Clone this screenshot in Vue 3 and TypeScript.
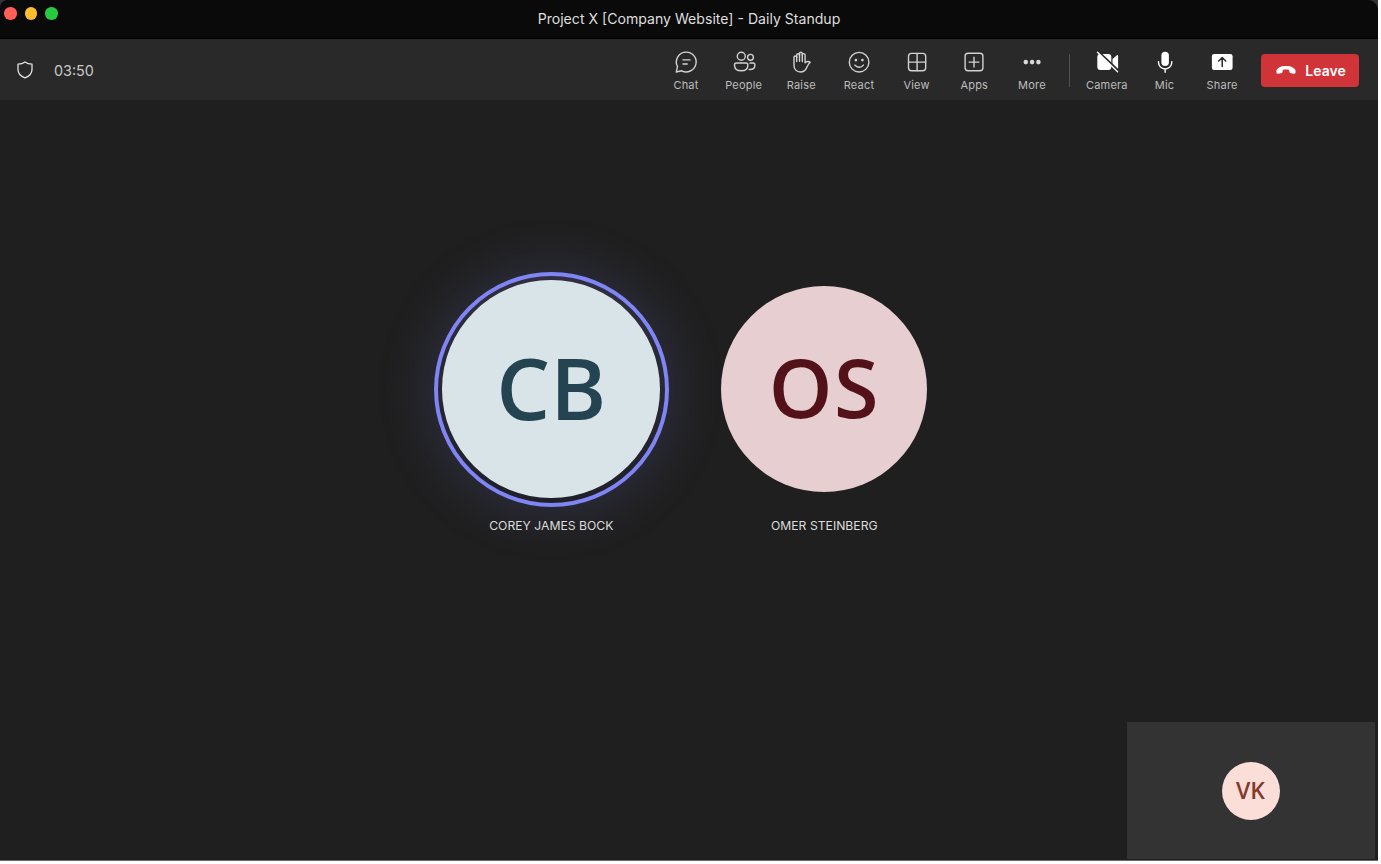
<script setup lang="ts">
interface Tool {
  id: string
  label: string
}

const tools: Tool[] = [
  { id: 'chat', label: 'Chat' },
  { id: 'people', label: 'People' },
  { id: 'raise', label: 'Raise' },
  { id: 'react', label: 'React' },
  { id: 'view', label: 'View' },
  { id: 'apps', label: 'Apps' },
  { id: 'more', label: 'More' },
]

const devices: Tool[] = [
  { id: 'camera', label: 'Camera' },
  { id: 'mic', label: 'Mic' },
  { id: 'share', label: 'Share' },
]
</script>

<template>
  <div class="desktop">
    <div class="window">
      <header class="titlebar">
        <div class="lights">
          <span class="light red"></span>
          <span class="light yellow"></span>
          <span class="light green"></span>
        </div>
        <h1 class="title">Project X [Company Website] - Daily Standup</h1>
      </header>

      <nav class="toolbar">
        <svg class="shield" viewBox="0 0 18 20">
          <path d="M9 1.900C11 3.400 13.300 4 16 4.100V9.600C16 13.600 13.300 16.400 9 17.900C4.700 16.400 2 13.600 2 9.600V4.100C4.700 4 7 3.400 9 1.900Z" />
        </svg>
        <span class="timer">03:50</span>

        <div class="tools">
          <button v-for="tool in tools" :key="tool.id" class="tool" type="button">
            <svg class="icon" viewBox="0 0 24 24">
              <template v-if="tool.id === 'chat'">
                <path d="M12.300 2.100A9.900 9.900 0 1 1 7.700 20.800L2.300 22L3.500 16.600A9.900 9.900 0 0 1 12.300 2.100Z" />
                <path d="M9 9.900H16M9 14H13.200" />
              </template>
              <template v-else-if="tool.id === 'people'">
                <circle cx="9.300" cy="6.200" r="4" />
                <circle cx="18.500" cy="7.300" r="2.900" />
                <path d="M4.400 13H14A1.900 1.900 0 0 1 15.900 14.900C15.900 18.900 13.200 20.800 9.200 20.800S2.500 18.900 2.500 14.900A1.900 1.900 0 0 1 4.400 13Z" />
                <path d="M18 13H21A1.900 1.900 0 0 1 22.900 14.900C22.900 18.300 20.800 19.900 17.200 19.500" />
              </template>
              <template v-else-if="tool.id === 'raise'">
                <path d="M5 7.300A1.350 1.350 0 0 1 7.700 7.300V5.200A1.400 1.400 0 0 1 10.500 5.200V3.700A1.400 1.400 0 0 1 13.300 3.700V5A1.400 1.400 0 0 1 16.100 5V12.800C17.600 11 20.300 11.200 21.200 12.500C18.700 14 18.400 17.200 16.500 19.700C15.100 21.400 13.500 22 11.500 22C7.400 22 5 19.300 5 15.200Z" />
                <path d="M7.700 6.800V11.500M10.500 4.600V11.300M13.300 4.400V11.500" />
              </template>
              <template v-else-if="tool.id === 'react'">
                <circle cx="12.100" cy="12.200" r="9.800" />
                <path d="M7.900 15.100C10 17.900 14.200 17.900 16.400 15.100" />
                <g class="solid"><circle cx="8.900" cy="10.100" r="1.300" /><circle cx="15.400" cy="10.100" r="1.300" /></g>
              </template>
              <template v-else-if="tool.id === 'view'">
                <rect x="3.500" y="3.400" width="17.200" height="17.300" rx="3" />
                <path d="M12.100 3.400V20.700M3.500 12.100H20.700" />
              </template>
              <template v-else-if="tool.id === 'apps'">
                <rect x="3.100" y="3.300" width="17.800" height="17.500" rx="3" />
                <path d="M12 7.200V17M7.100 12.100H16.900" />
              </template>
              <g v-else class="solid">
                <circle cx="5.800" cy="12.100" r="2.300" />
                <circle cx="12.100" cy="12.100" r="2.300" />
                <circle cx="18.400" cy="12.100" r="2.300" />
              </g>
            </svg>
            <span class="label">{{ tool.label }}</span>
          </button>

          <span class="divider"></span>

          <button v-for="device in devices" :key="device.id" class="tool" type="button">
            <svg class="icon device" viewBox="0 0 24 24">
              <template v-if="device.id === 'camera'">
                <rect class="solid" x="2.300" y="4" width="14" height="16" rx="3" />
                <path class="solid" d="M17.500 9.100L21.900 5.300C22.400 4.900 23.100 5.200 23.100 5.900V18.100C23.100 18.800 22.400 19.100 21.900 18.700L17.500 15Z" />
                <path class="gap" d="M3.400 1.500L24 21.200" />
                <path d="M2.500 2.300L22.600 21.700" />
              </template>
              <template v-else-if="device.id === 'mic'">
                <rect class="solid" x="8.400" y="1.800" width="7.500" height="14.200" rx="3.750" />
                <path d="M5.500 11.600V12.300A6.650 6.650 0 0 0 18.800 12.300V11.600M12.150 19V22.200" />
              </template>
              <template v-else>
                <rect class="solid" x="1.900" y="4.100" width="20.700" height="15.900" rx="2.200" />
                <path class="dark" d="M12.200 16.600V7.800M8.700 11L12.200 7.500L15.700 11" />
              </template>
            </svg>
            <span class="label">{{ device.label }}</span>
          </button>
        </div>

        <button class="leave" type="button">
          <svg class="phone" viewBox="0 0 20 10">
            <path d="M10 1C15.500 1 19.400 3 19.600 6.200C19.700 8 19.100 8.900 17.700 8.700L15 8.200C14 8 13.500 7.500 13.400 6.500L13.200 5C11.200 4.400 8.800 4.400 6.800 5L6.600 6.500C6.500 7.500 6 8 5 8.200L2.300 8.700C0.900 8.900 0.300 8 0.400 6.200C0.600 3 4.500 1 10 1Z" />
          </svg>
          <span>Leave</span>
        </button>
      </nav>

      <main class="stage">
        <section class="participant">
          <div class="ring">
            <div class="avatar teal"><span>CB</span></div>
          </div>
          <p class="name">COREY JAMES BOCK</p>
        </section>
        <section class="participant">
          <div class="slot">
            <div class="avatar maroon"><span>OS</span></div>
          </div>
          <p class="name">OMER STEINBERG</p>
        </section>

        <aside class="self">
          <div class="avatar rose"><span>VK</span></div>
        </aside>
      </main>
    </div>
  </div>
</template>

<style>
html,
body {
  background: #fff;
  overflow: hidden;
}
</style>

<style scoped>
.desktop {
  width: 1378px;
  background: #34323c;
}

.window {
  height: 861px;
  box-sizing: border-box;
  display: flex;
  flex-direction: column;
  background: #1f1f1f;
  border-bottom: 1px solid #6c686b;
  border-radius: 8px 10px 0 0;
  overflow: hidden;
  font-family: Inter, "Liberation Sans", sans-serif;
}

.titlebar {
  height: 39px;
  flex: none;
  box-sizing: border-box;
  display: grid;
  grid-template-columns: 1fr auto 1fr;
  background: #0a0a0a;
  border-bottom: 1px solid #000;
}

.lights {
  display: flex;
  gap: 8px;
  padding: 7px 0 0 4.300px;
}

.light {
  width: 12.500px;
  height: 12.500px;
  border-radius: 50%;
}

.red { background: #ff5f57; }
.yellow { background: #febc2e; }
.green { background: #28c840; }

.title {
  margin: 0;
  font-size: 14.100px;
  line-height: 38px;
  font-weight: 400;
  color: #dedede;
  white-space: nowrap;
}

.toolbar {
  height: 62px;
  flex: none;
  box-sizing: border-box;
  display: flex;
  align-items: center;
  padding: 1px 19px 0 16px;
  background: #292929;
  border-bottom: 1px solid #211f20;
}

.shield {
  width: 18px;
  height: 20px;
  fill: none;
  stroke: #e2e2e2;
  stroke-width: 1.300;
  stroke-linejoin: round;
}

.timer {
  margin-left: 20px;
  padding-top: 1px;
  font-size: 14.400px;
  color: #c8c8c8;
}

.tools {
  display: flex;
  margin-left: auto;
  height: 100%;
}

.tool {
  width: 57.670px;
  padding: 10px 0 0;
  border: 0;
  background: none;
  display: flex;
  flex-direction: column;
  align-items: center;
  font-family: inherit;
}

.icon {
  width: 24px;
  height: 24px;
  fill: none;
  stroke: #d2d2d2;
  stroke-width: 1.400;
  stroke-linecap: round;
  stroke-linejoin: round;
}

.icon .solid {
  fill: #d8d8d8;
  stroke: none;
}

.icon.device { stroke: #fff; }
.icon.device .solid { fill: #fff; }
.icon .gap { stroke: #292929; stroke-width: 2; }
.icon .dark { stroke: #292929; stroke-width: 1.500; }

.label {
  margin-top: 4px;
  font-size: 11px;
  line-height: 15px;
  letter-spacing: 0.200px;
  color: #bdbdbd;
}

.divider {
  width: 1.300px;
  height: 33px;
  margin: 14px 8px 0;
  background: #505050;
}

.leave {
  width: 98px;
  height: 33px;
  margin-left: 10px;
  padding: 0 0 0 2px;
  border: 0;
  border-radius: 4px;
  background: #d13438;
  color: #fff;
  display: flex;
  align-items: center;
  justify-content: center;
  gap: 9px;
  font-family: inherit;
  font-size: 14px;
  font-weight: 600;
}

.phone {
  width: 20px;
  height: 10px;
  fill: #fff;
}

.stage {
  flex: 1;
  position: relative;
  display: flex;
  align-items: flex-start;
  gap: 38px;
  padding: 170.700px 0 0 433.800px;
}

.participant {
  display: flex;
  flex-direction: column;
  align-items: center;
  width: 235px;
}

.ring,
.slot {
  width: 235px;
  height: 235px;
  box-sizing: border-box;
  display: flex;
  align-items: center;
  justify-content: center;
}

.ring {
  border: 4px solid #7f85f5;
  border-radius: 50%;
  background: linear-gradient(#302e40, #202028);
  box-shadow: 0 0 52px 8px rgba(127, 133, 245, 0.150);
}

.avatar {
  display: flex;
  align-items: center;
  justify-content: center;
  border-radius: 50%;
  font-family: "Open Sans", "Noto Sans", sans-serif;
  font-weight: 600;
  line-height: 1;
}

.teal {
  width: 218px;
  height: 218px;
  box-sizing: border-box;
  padding-bottom: 4px;
  background: #d9e4e9;
  color: #254451;
  font-size: 85px;
}

.maroon {
  width: 206px;
  height: 206px;
  box-sizing: border-box;
  padding: 0 0 5px;
  background: #e7cfd1;
  color: #53121a;
  font-size: 81px;
  letter-spacing: 1.500px;
}

.rose {
  width: 58px;
  height: 58px;
  background: #fbded8;
  color: #85392c;
  font-size: 23px;
}

.name {
  margin: 11px 0 0;
  font-size: 12.200px;
  line-height: 15px;
  color: #dcdcdc;
  white-space: nowrap;
}

/* Self view floats over the bottom-right corner of the stage. */
.self {
  position: absolute;
  right: 3.500px;
  bottom: 1px;
  width: 248px;
  height: 137px;
  display: flex;
  align-items: center;
  justify-content: center;
  background: #333;
}
</style>
